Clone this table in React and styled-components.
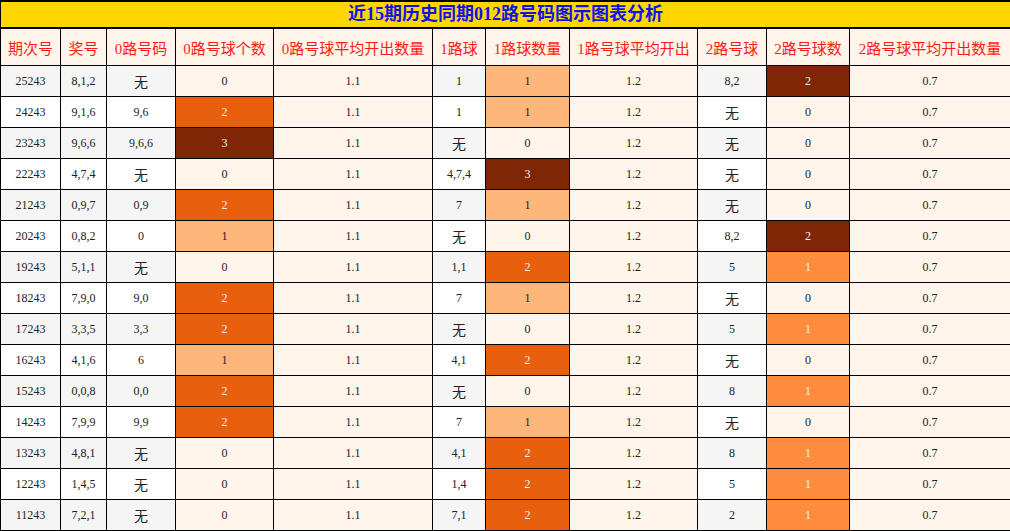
import React from 'react'
import styled, { createGlobalStyle } from 'styled-components'

const GlobalStyle = createGlobalStyle`
  body {
    margin: 0;
    background: #fff;
  }
`;

const Table = styled.table`
  width: 1010px;
  table-layout: fixed;
  border-collapse: collapse;
  font-family: "Liberation Serif", "Noto Sans CJK SC", serif;
  border: 1px solid #000;
`;

const TitleCell = styled.th`
  height: 25px;
  padding: 0;
  background: #ffd700;
  color: #1010f0;
  font-size: 18px;
  font-weight: bold;
  text-align: center;
  border: 1px solid #000;
  border-top: 2px solid #000;
  border-bottom: 2px solid #000;
  line-height: 25px;
`;

const HeadCell = styled.th`
  height: 36px;
  padding: 0;
  background: #fff5eb;
  color: #ff1a1a;
  font-size: 15px;
  font-weight: normal;
  font-family: "Liberation Serif", "Noto Sans CJK SC", serif;
  border: 1px solid #000;
  white-space: nowrap;
  overflow: hidden;
`;

const Cell = styled.td`
  height: 30px;
  padding: 0;
  text-align: center;
  font-size: ${({ $cjk }) => ($cjk ? '14px' : '12px')};
  color: ${({ $fg }) => $fg || '#222'};
  background: ${({ $bg }) => $bg};
  border: 1px solid #000;
  white-space: nowrap;
`;

const widths = [60, 46, 69, 98, 159, 53, 84, 128, 69, 83, 161]

const headers = [
  '期次号', '奖号', '0路号码', '0路号球个数', '0路号球平均开出数量',
  '1路球', '1路球数量', '1路号球平均开出', '2路号球', '2路号球数', '2路号球平均开出数量',
]

const rows = [
  ['25243', '8,1,2', '无', 0, '1', 1, '8,2', 2],
  ['24243', '9,1,6', '9,6', 2, '1', 1, '无', 0],
  ['23243', '9,6,6', '9,6,6', 3, '无', 0, '无', 0],
  ['22243', '4,7,4', '无', 0, '4,7,4', 3, '无', 0],
  ['21243', '0,9,7', '0,9', 2, '7', 1, '无', 0],
  ['20243', '0,8,2', '0', 1, '无', 0, '8,2', 2],
  ['19243', '5,1,1', '无', 0, '1,1', 2, '5', 1],
  ['18243', '7,9,0', '9,0', 2, '7', 1, '无', 0],
  ['17243', '3,3,5', '3,3', 2, '无', 0, '5', 1],
  ['16243', '4,1,6', '6', 1, '4,1', 2, '无', 0],
  ['15243', '0,0,8', '0,0', 2, '无', 0, '8', 1],
  ['14243', '7,9,9', '9,9', 2, '7', 1, '无', 0],
  ['13243', '4,8,1', '无', 0, '4,1', 2, '8', 1],
  ['12243', '1,4,5', '无', 0, '1,4', 2, '5', 1],
  ['11243', '7,2,1', '无', 0, '7,1', 2, '2', 1],
]

// Oranges colour scale, picked by value relative to the column max
const shade = (v, max) => {
  const r = v / max
  if (r === 0) return { bg: '#fff5eb', fg: '#222' }
  if (r < 0.4) return { bg: '#fdb77a', fg: '#222' }
  if (r < 0.6) return { bg: '#fd8d3c', fg: '#f1f1f1' }
  if (r < 0.9) return { bg: '#e85f0e', fg: '#f1f1f1' }
  return { bg: '#7f2704', fg: '#f1f1f1' }
}

const isCjk = (s) => s === '无'

const App = () => {
  return (
    <>
      <GlobalStyle />
      <Table>
        <colgroup>
          {widths.map((w, i) => <col key={i} style={{ width: w }} />)}
        </colgroup>
        <thead>
          <tr>
            <TitleCell colSpan={11}>近15期历史同期012路号码图示图表分析</TitleCell>
          </tr>
          <tr>
            {headers.map((h) => <HeadCell key={h}>{h}</HeadCell>)}
          </tr>
        </thead>
        <tbody>
          {rows.map((r, i) => {
            const plain = i % 2 === 0 ? '#f5f5f5' : '#fff'
            const c0 = shade(r[3], 3)
            const c1 = shade(r[5], 3)
            const c2 = shade(r[7], 2)
            return (
              <tr key={r[0]}>
                <Cell $bg={plain}>{r[0]}</Cell>
                <Cell $bg={plain}>{r[1]}</Cell>
                <Cell $bg={plain} $cjk={isCjk(r[2])}>{r[2]}</Cell>
                <Cell $bg={c0.bg} $fg={c0.fg}>{r[3]}</Cell>
                <Cell $bg="#fff5eb">1.1</Cell>
                <Cell $bg={plain} $cjk={isCjk(r[4])}>{r[4]}</Cell>
                <Cell $bg={c1.bg} $fg={c1.fg}>{r[5]}</Cell>
                <Cell $bg="#fff5eb">1.2</Cell>
                <Cell $bg={plain} $cjk={isCjk(r[6])}>{r[6]}</Cell>
                <Cell $bg={c2.bg} $fg={c2.fg}>{r[7]}</Cell>
                <Cell $bg="#fff5eb">0.7</Cell>
              </tr>
            )
          })}
        </tbody>
      </Table>
    </>
  )
}

export default App
